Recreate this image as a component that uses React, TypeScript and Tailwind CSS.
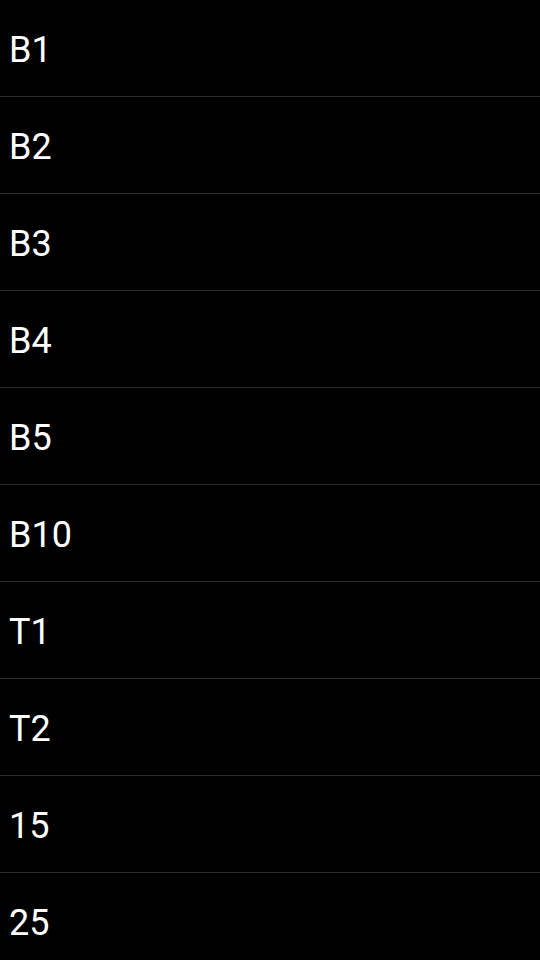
import React from "react";

const items = ["B1", "B2", "B3", "B4", "B5", "B10", "T1", "T2", "15", "25"];

export default function App() {
  return (
    <div
      className="w-[540px] h-[960px] overflow-hidden bg-black"
      style={{ fontFamily: "Roboto, 'Liberation Sans', sans-serif" }}
    >
      <ul>
        {items.map((item) => (
          <li
            key={item}
            className="h-[97px] flex items-center pl-[9px] pt-[4px] border-b border-[#2b2b2b] text-white text-[36px] leading-none"
          >
            {item}
          </li>
        ))}
      </ul>
    </div>
  );
}
